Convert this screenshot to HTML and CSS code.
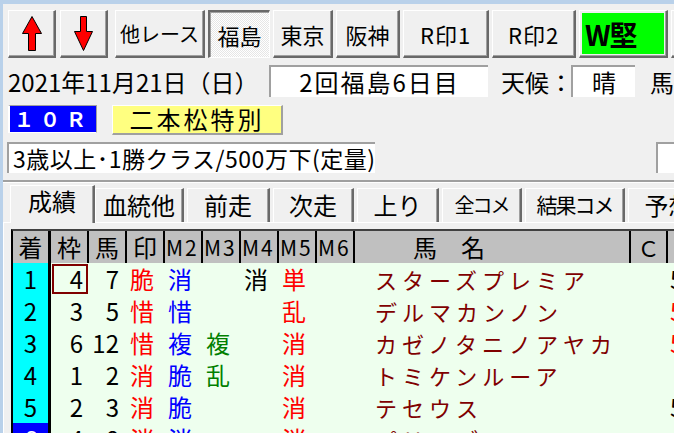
FILE: index.html
```html
<!DOCTYPE html>
<html lang="ja">
<head>
    <meta charset="UTF-8">
    <title>成績</title>
    <link rel="stylesheet" href="styles.css">
</head>
<body>
<div class="window">
    <div class="toolbar">
        <button class="btn btn-arrow">
            <svg width="20" height="35" viewBox="0 0 20 35"><polygon points="10,0.5 19.5,17.5 13.5,17.5 13.5,34.5 6.5,34.5 6.5,17.5 0.5,17.5" fill="#ff0000" stroke="#000" stroke-width="1"/></svg>
        </button>
        <button class="btn btn-arrow">
            <svg width="19" height="35" viewBox="0 0 19 35"><polygon points="6.5,0.5 12.5,0.5 12.5,15.5 18.5,15.5 9.5,34.5 0.5,15.5 6.5,15.5" fill="#ff0000" stroke="#000" stroke-width="1"/></svg>
        </button>
        <button class="btn btn-other">他レース</button>
        <button class="btn btn-venue btn-pressed">福島</button>
        <button class="btn btn-venue btn-tokyo">東京</button>
        <button class="btn btn-venue btn-hanshin">阪神</button>
        <button class="btn btn-mark">R印1</button>
        <button class="btn btn-mark btn-mark2">R印2</button>
        <button class="btn btn-green"><span class="green-face">W堅</span></button>
        <button class="btn btn-mark"></button>
    </div>

    <div class="info-row">
        <span class="date">2021年11月21日（日）</span>
        <span class="field field-meet">2回福島6日目</span>
        <span class="label label-weather">天候：</span>
        <span class="field field-weather">晴</span>
        <span class="label label-more">馬</span>
    </div>

    <div class="race-row">
        <span class="race-no">１０Ｒ</span>
        <span class="race-name">二本松特別</span>
    </div>

    <div class="cond-row">
        <span class="field field-cond">3歳以上･1勝クラス/500万下(定量)</span>
        <span class="field field-extra"></span>
    </div>

    <div class="separator"></div>

    <div class="tabs">
        <div class="tab tab-active">成績</div>
        <div class="tab tab-pedigree">血統他</div>
        <div class="tab tab-prev">前走</div>
        <div class="tab tab-next">次走</div>
        <div class="tab tab-last">上り</div>
        <div class="tab tab-all">全コメ</div>
        <div class="tab tab-result">結果コメ</div>
        <div class="tab">予想</div>
    </div>

    <div class="panel">
        <table class="grid">
            <thead>
                <tr>
                    <th class="col-rank">着</th>
                    <th class="col-num">枠</th>
                    <th class="col-num">馬</th>
                    <th class="col-num">印</th>
                    <th class="col-num col-m">M2</th>
                    <th class="col-num col-m">M3</th>
                    <th class="col-num col-m">M4</th>
                    <th class="col-num col-m">M5</th>
                    <th class="col-num col-m">M6</th>
                    <th class="col-name">馬　名</th>
                    <th class="col-c">Ｃ</th>
                    <th class="col-rest"></th>
                </tr>
            </thead>
            <tbody>
                <tr>
                    <td class="rank">1</td>
                    <td class="waku focus">4</td>
                    <td class="uma">7</td>
                    <td class="mark r">脆</td>
                    <td class="mark b">消</td>
                    <td class="mark"></td>
                    <td class="mark">消</td>
                    <td class="mark r">単</td>
                    <td class="mark"></td>
                    <td class="name">スターズプレミア</td>
                    <td></td>
                    <td class="rest">5</td>
                </tr>
                <tr>
                    <td class="rank">2</td>
                    <td class="waku">3</td>
                    <td class="uma">5</td>
                    <td class="mark r">惜</td>
                    <td class="mark b">惜</td>
                    <td class="mark"></td>
                    <td class="mark"></td>
                    <td class="mark r">乱</td>
                    <td class="mark"></td>
                    <td class="name">デルマカンノン</td>
                    <td></td>
                    <td class="rest r">5</td>
                </tr>
                <tr>
                    <td class="rank">3</td>
                    <td class="waku">6</td>
                    <td class="uma">12</td>
                    <td class="mark r">惜</td>
                    <td class="mark b">複</td>
                    <td class="mark g">複</td>
                    <td class="mark"></td>
                    <td class="mark r">消</td>
                    <td class="mark"></td>
                    <td class="name">カゼノタニノアヤカ</td>
                    <td></td>
                    <td class="rest r">5</td>
                </tr>
                <tr>
                    <td class="rank">4</td>
                    <td class="waku">1</td>
                    <td class="uma">2</td>
                    <td class="mark r">消</td>
                    <td class="mark b">脆</td>
                    <td class="mark g">乱</td>
                    <td class="mark"></td>
                    <td class="mark r">消</td>
                    <td class="mark"></td>
                    <td class="name">トミケンルーア</td>
                    <td></td>
                    <td class="rest"></td>
                </tr>
                <tr>
                    <td class="rank">5</td>
                    <td class="waku">2</td>
                    <td class="uma">3</td>
                    <td class="mark r">消</td>
                    <td class="mark b">脆</td>
                    <td class="mark"></td>
                    <td class="mark"></td>
                    <td class="mark r">消</td>
                    <td class="mark"></td>
                    <td class="name">テセウス</td>
                    <td></td>
                    <td class="rest">5</td>
                </tr>
                <tr>
                    <td class="rank rank-out">6</td>
                    <td class="waku">4</td>
                    <td class="uma">8</td>
                    <td class="mark r">消</td>
                    <td class="mark b">消</td>
                    <td class="mark"></td>
                    <td class="mark"></td>
                    <td class="mark r">消</td>
                    <td class="mark"></td>
                    <td class="name">パリスブルーベル</td>
                    <td></td>
                    <td class="rest"></td>
                </tr>
            </tbody>
        </table>
    </div>
</div>
</body>
</html>
```

FILE: styles.css
```css
body {
    margin: 0;
    width: 674px;
    height: 433px;
    overflow: hidden;
    background-color: #f0f0f0;
    font-family: "Noto Sans CJK JP", sans-serif;
    color: #000;
}
.window {
    border-top: 4px solid #b9d1ea;
    border-left: 3px solid #b9d1ea;
    height: 429px;
    white-space: nowrap;
}

/* toolbar */
.toolbar {
    display: flex;
    height: 48px;
    margin: 6px 0 0 5px;
}
.btn {
    box-sizing: border-box;
    flex-shrink: 0;
    display: flex;
    align-items: center;
    justify-content: center;
    height: 48px;
    margin: 0 3px 0 0;
    padding: 0;
    background-color: #f0f0f0;
    border-style: solid;
    border-width: 1px 2px 2px 1px;
    border-color: #fff #696969 #696969 #fff;
    box-shadow: inset -1px -1px 0 #a0a0a0;
    font-family: inherit;
    font-size: 20px;
    color: #000;
}
.btn-arrow {
    width: 48px;
    margin-right: 4px;
}
.btn-other {
    width: 90px;
    margin-left: 3px;
}
.btn-venue {
    width: 62px;
    font-size: 22px;
}
.btn-tokyo {
    width: 60px;
}
.btn-hanshin {
    width: 64px;
}
.btn-pressed {
    border-width: 2px 1px 1px 2px;
    border-color: #696969 #fff #fff #696969;
    box-shadow: inset 1px 1px 0 #a0a0a0;
    background: repeating-conic-gradient(#fff 0 25%, #e6e6e6 0 50%) 0 0 / 2px 2px;
}
.btn-mark {
    width: 86px;
    font-size: 22px;
    letter-spacing: 1px;
}
.btn-mark2 {
    width: 84px;
}
.btn-green {
    width: 89px;
    padding: 2px;
    align-items: stretch;
}
.green-face {
    flex: 1;
    display: flex;
    align-items: center;
    padding-left: 3px;
    background-color: #00ff00;
    font-size: 28px;
    font-weight: bold;
    letter-spacing: -1px;
}

/* info rows */
.info-row {
    display: flex;
    align-items: center;
    height: 32px;
    margin: 7px 0 0 5px;
    font-size: 24px;
}
.date {
    width: 265px;
}
.field {
    box-sizing: border-box;
    display: block;
    height: 32px;
    background-color: #fff;
    border-style: solid;
    border-width: 2px 0 0 2px;
    border-color: #a0a0a0;
}
.field-meet {
    width: 222px;
    line-height: 29px;
    text-align: center;
    letter-spacing: 2px;
}
.label-weather {
    width: 62px;
    margin-left: 13px;
    margin-right: 8px;
}
.field-weather {
    width: 65px;
    line-height: 29px;
    text-align: center;
}
.label-more {
    margin-left: 15px;
}

.race-row {
    display: flex;
    align-items: flex-start;
    height: 30px;
    margin: 8px 0 0 5px;
}
.race-no {
    box-sizing: border-box;
    width: 89px;
    height: 28px;
    border-style: solid;
    border-width: 1px 1px 1px 2px;
    border-color: #a0a0a0 #a0a0a0 #fff #fff;
    background-color: #0000ff;
    color: #fff;
    font-size: 20px;
    font-weight: bold;
    line-height: 25px;
    letter-spacing: 6px;
    text-align: center;
}
.race-name {
    box-sizing: border-box;
    width: 171px;
    height: 30px;
    margin-left: 15px;
    border-style: solid;
    border-width: 1px 2px 2px 1px;
    border-color: #fff #a0a0a0 #a0a0a0 #fff;
    background-color: #ffff80;
    font-size: 24px;
    line-height: 26px;
    letter-spacing: 3px;
    text-align: center;
}

.cond-row {
    display: flex;
    height: 31px;
    margin: 7px 0 0 4px;
}
.field-cond {
    width: 381px;
    height: 31px;
    padding-left: 4px;
    font-size: 23px;
    line-height: 28px;
    letter-spacing: 0.5px;
}
.field-extra {
    width: 20px;
    height: 31px;
    margin-left: 281px;
}

.separator {
    margin-top: 7px;
    border-top: 2px solid #a0a0a0;
    border-bottom: 1px solid #fff;
}

/* tabs */
.tabs {
    display: flex;
    align-items: flex-end;
    height: 37px;
    margin-top: 2px;
    padding-left: 7px;
}
.tab {
    box-sizing: border-box;
    flex-shrink: 0;
    width: 82px;
    height: 34px;
    margin-right: 3px;
    border-style: solid;
    border-width: 1px 2px 0 1px;
    border-color: #fff #696969 #fff #fff;
    box-shadow: inset -1px 0 0 #a0a0a0;
    font-size: 24px;
    line-height: 31px;
    text-align: center;
}
.tab-active {
    position: relative;
    z-index: 1;
    width: 85px;
    height: 38px;
    margin-right: 0;
    margin-bottom: -1px;
    background-color: #f0f0f0;
    line-height: 30px;
}
.tab-pedigree {
    width: 89px;
}
.tab-prev {
    width: 83px;
}
.tab-next {
    width: 81px;
}
.tab-all {
    width: 80px;
    font-size: 20px;
    letter-spacing: -2px;
}
.tab-result {
    width: 100px;
    font-size: 21px;
    letter-spacing: -2px;
}

.panel {
    border-top: 1px solid #fff;
    border-left: 1px solid #fff;
    padding: 6px 0 0 7px;
}

/* grid */
.grid {
    table-layout: fixed;
    border-collapse: separate;
    border-spacing: 0;
    width: 715px;
    border-top: 2px solid #404040;
    border-left: 2px solid #000;
}
.grid th,
.grid td {
    box-sizing: border-box;
    height: 32px;
    padding: 0;
    overflow: hidden;
    white-space: nowrap;
    font-size: 24px;
    line-height: 30px;
}
.grid th {
    background-color: #c0c0c0;
    border-right: 2px solid #000;
    font-weight: normal;
    text-align: center;
}
.col-rank {
    width: 38px;
}
.grid .col-rank {
    border-right-width: 3px;
}
.col-num {
    width: 38px;
}
.grid .col-m {
    font-size: 21px;
    letter-spacing: 2px;
    text-align: left;
    padding-left: 1px;
}
.col-name {
    width: 276px;
}
.grid .col-name {
    text-align: left;
    padding-left: 58px;
}
.col-c {
    width: 37px;
}
.grid .col-c {
    font-size: 22px;
}
.col-rest {
    width: 60px;
}

.grid td {
    background-color: #eeffee;
}
.grid .rank {
    background-color: #00ffff;
    border-right: 3px solid #000;
    text-align: center;
}
.grid .rank-out {
    background-color: #0000ff;
    color: #fff;
}
.waku {
    text-align: right;
    padding-right: 6px !important;
}
.focus {
    outline: 2px solid #800000;
    outline-offset: -3px;
}
.uma {
    text-align: right;
    padding-right: 8px !important;
}
.mark {
    padding-left: 3px !important;
}
.name {
    padding-left: 20px !important;
    color: #800000;
    font-size: 22px !important;
    letter-spacing: 5px;
}
.rest {
    padding-left: 2px !important;
}
.r {
    color: #ff0000;
}
.b {
    color: #0000ff;
}
.g {
    color: #008000;
}
```
